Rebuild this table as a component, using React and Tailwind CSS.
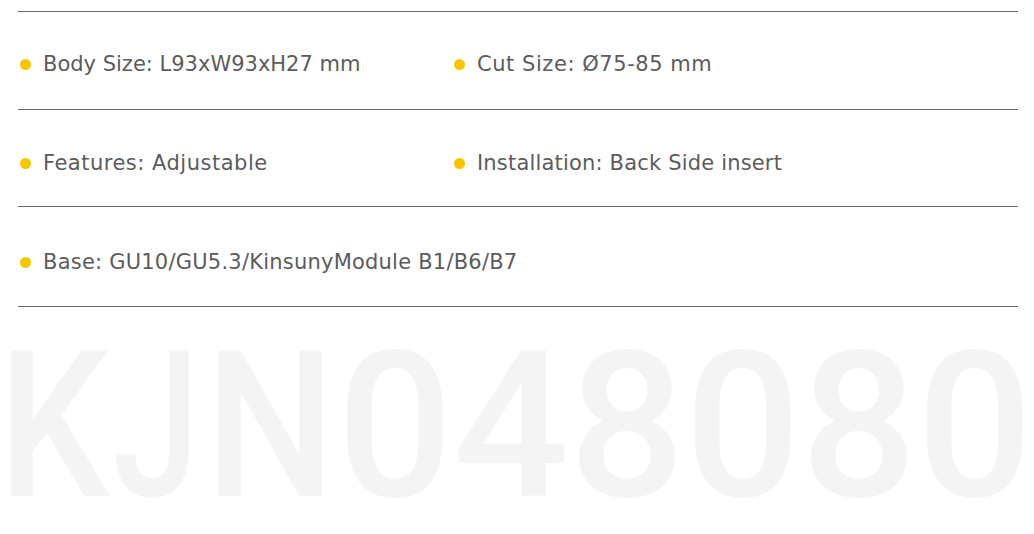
import React from "react";

const Item = ({ children, track = "" }) => (
  <div className="flex items-center">
    <span className="w-[11px] h-[11px] rounded-full bg-[#f7c600] ml-[2px] mr-[12px] shrink-0" />
    <span className={`text-[21px] text-[#5c5c5c] leading-none whitespace-nowrap ${track}`}>{children}</span>
  </div>
);

export default function App() {
  return (
    <div className="w-[1034px] h-[534px] bg-white overflow-hidden" style={{ fontFamily: '"DejaVu Sans", sans-serif' }}>
      <div className="pt-[11px] pl-[18px] w-[1018px]">
        <div className="border-t border-[#666] h-[98px] flex items-center pt-[8px]">
          <div className="w-[434px]"><Item>Body Size: L93xW93xH27 mm</Item></div>
          <Item track="tracking-[0.55px]">Cut Size: Ø75-85 mm</Item>
        </div>
        <div className="border-t border-[#666] h-[97px] flex items-center pt-[10px]">
          <div className="w-[434px]"><Item track="tracking-[0.5px]">Features: Adjustable</Item></div>
          <Item track="tracking-[0.18px]">Installation: Back Side insert</Item>
        </div>
        <div className="border-t border-[#666] border-b h-[101px] flex items-center pt-[12px]">
          <Item track="tracking-[0.22px]">Base: GU10/GU5.3/KinsunyModule B1/B6/B7</Item>
        </div>
      </div>
      <div
        className="text-[204px] font-medium leading-none text-[#f4f4f4] whitespace-nowrap mt-[18px]"
        style={{ fontFamily: 'Roboto, sans-serif' }}
      >
        <span className="inline-flex justify-center w-[108px] scale-x-[0.86]">K</span>
        <span className="inline-flex justify-center w-[96px] scale-x-[0.76]">J</span>
        <span className="inline-flex justify-center w-[132px] scale-x-[0.9]">N</span>
        <span className="ml-[1px]">048080</span>
      </div>
    </div>
  );
}
